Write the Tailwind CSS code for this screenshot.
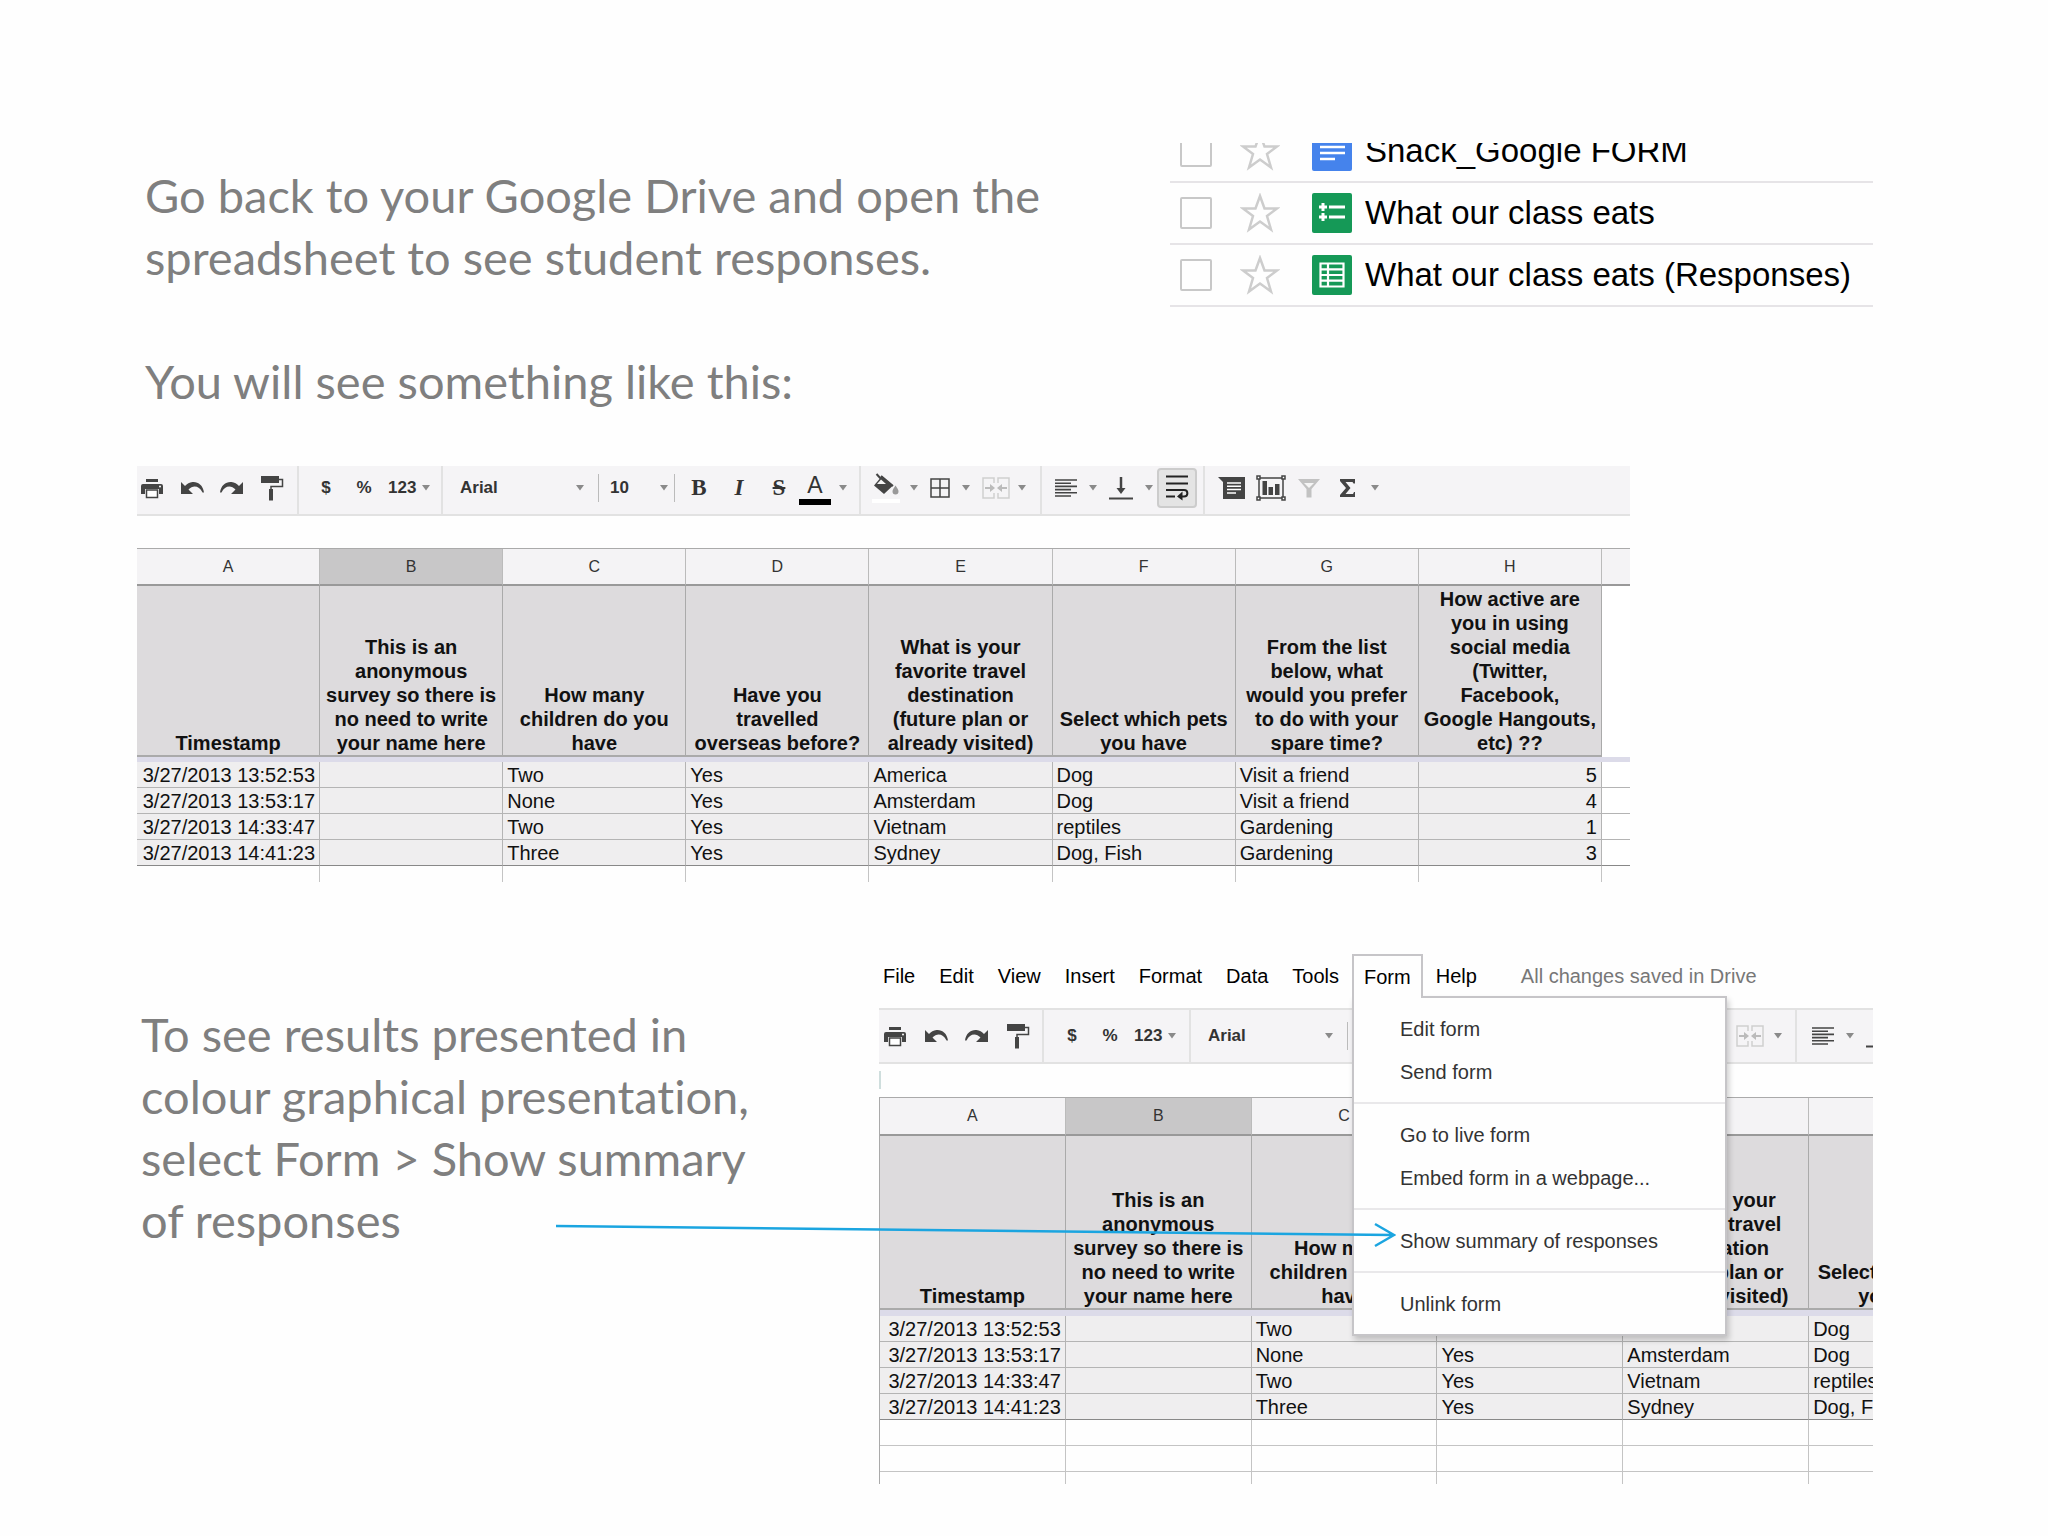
<!DOCTYPE html>
<html lang="en">
<head>
    <meta charset="UTF-8">
    <meta name="viewport" content="width=device-width, initial-scale=1.0">
    <title>Google Forms - Viewing Responses</title>
    <script src="https://cdn.jsdelivr.net/npm/@tailwindcss/browser@4"></script>
</head>
<body class="bg-[#fefefe] min-h-screen font-['Liberation_Sans',Arial,sans-serif] text-[#222]">

    <!-- Shared icons -->
    <svg class="hidden">
        <symbol id="star" viewBox="0 0 40 40"><path d="M20 3l4.500 12.500H37L27 23l4 13.500L20 28.500 9 36.500 13 23 3 15.500h12.500z" fill="none" stroke="#cdcdcd" stroke-width="2.500"/></symbol>
        <symbol id="caret" viewBox="0 0 8 6"><path d="M0 0h8L4 5.500z" fill="#8a8a8a"/></symbol>
        <symbol id="print" viewBox="0 0 24 24"><path d="M6 3h12v3H6zM3 8h18a2 2 0 0 1 2 2v8h-4v-5H5v5H1v-8a2 2 0 0 1 2-2z" fill="#444"/><path d="M6.500 14h11v7.500h-11z" fill="#fff" stroke="#444" stroke-width="1.500"/><circle cx="20" cy="10.500" r="1" fill="#fff"/></symbol>
        <symbol id="undo" viewBox="0 0 24 24"><path d="M1 6v12h12L8.500 13.500C13 9 19 9.500 22.500 16.500H24C23 9 18 5.500 12.500 6 9.500 6.300 7 8 5 10z" fill="#444"/></symbol>
        <symbol id="redo" viewBox="0 0 24 24"><path d="M23 6v12H11l4.500-4.500C11 9 5 9.500 1.500 16.500H0C1 9 6 5.500 11.500 6c3 .3 5.500 2 7.500 4z" fill="#444"/></symbol>
        <symbol id="roller" viewBox="0 0 24 26"><path d="M1 1h18v7H1z" fill="#444"/><path d="M19 4.500h3.500v7H11V15" fill="none" stroke="#444" stroke-width="1.500"/><path d="M9 14h4v11.500H9z" fill="#444"/></symbol>
        <symbol id="bucket" viewBox="0 0 28 32"><path d="M4.500 2l6 6.500" stroke="#444" stroke-width="2" fill="none"/><path d="M9 4l12 10" stroke="#444" stroke-width="2" fill="none"/><path d="M10 4L2 13.500 12 22l9-8.500z" fill="#444"/><path d="M9 7.500L5 12h9z" fill="#f5f5f5"/><path d="M23.500 13.500c2 3 3 4.500 3 6a3 3 0 0 1-6 0c0-1.500 1-3 3-6z" fill="#999"/><path d="M0 27h28v4H0z" fill="#fff"/></symbol>
        <symbol id="grid" viewBox="0 0 20 20"><path d="M1 1h18v18H1zM10 1v18M1 10h18" fill="none" stroke="#444" stroke-width="1.500"/></symbol>
        <symbol id="merge" viewBox="0 0 28 22"><path d="M12 6V1H1v20h11v-5M16 6V1h11v20H16v-5" fill="none" stroke="#cfcfcf" stroke-width="1.500"/><path d="M3 11h6M25 11h-6" stroke="#bbb" stroke-width="2"/><path d="M8 7l5 4-5 4zM20 7l-5 4 5 4z" fill="#bbb"/></symbol>
        <symbol id="align" viewBox="0 0 22 18"><path d="M0 1h22M0 4.200h16M0 7.400h22M0 10.600h16M0 13.800h22M0 17h16" stroke="#444" stroke-width="1.600"/></symbol>
        <symbol id="valign" viewBox="0 0 24 24"><path d="M12 1v12" stroke="#444" stroke-width="2.500"/><path d="M7.500 12h9L12 18z" fill="#444"/><path d="M0 22.500h24" stroke="#444" stroke-width="2"/></symbol>
        <symbol id="wrap" viewBox="0 0 24 26"><path d="M1 1.500h22M1 8.500h22" stroke="#222" stroke-width="2"/><path d="M1 15h18c4.500 0 4.500 6.500 0 6.500h-3M1 21.500h9" fill="none" stroke="#222" stroke-width="2"/><path d="M17.500 16.500v9l-5.500-4z" fill="#222"/></symbol>
        <symbol id="comment" viewBox="0 0 28 24"><path d="M0 1h27v22H5V6z" fill="#444"/><path d="M9 7h14M9 10.300h14M9 13.600h14M9 16.900h9" stroke="#fff" stroke-width="1.500"/></symbol>
        <symbol id="chart" viewBox="0 0 30 26"><path d="M3 3h24v20H3z" fill="none" stroke="#444" stroke-width="1.500"/><path d="M6.500 6H11v14H6.500zM12.500 12H17v8h-4.500zM19 9h4.500v11H19z" fill="#444"/><path d="M1 1h3v3H1zM26 1h3v3h-3zM1 22h3v3H1zM26 22h3v3h-3z" fill="#fff" stroke="#444" stroke-width="1.500"/></symbol>
        <symbol id="filter" viewBox="0 0 22 20"><path d="M0 1h22l-8.500 10v8.500h-5V11z" fill="#c2c2c2"/><path d="M6 5h10l-5 5z" fill="#f5f5f5"/></symbol>
        <symbol id="sigma" viewBox="0 0 15 20"><path d="M0 1h15v4.500h-1.500L12.500 4H5.500L10.500 10 5.500 16h7.500l1-2h1v5H0v-2L6 10 0 3z" fill="#444"/></symbol>
    </svg>

    <main class="pt-[143px] pl-[137px] pr-[175px]">

        <!-- Step 1: open the spreadsheet -->
        <section class="grid grid-cols-[1033px_1fr]">
            <div class="pt-[21px] pl-2 font-['Lato',sans-serif] text-[47px] leading-[62px] text-[#7f7f7f]">
                <p>Go back to your Google Drive and open the<br>spreadsheet to see student responses.</p>
                <p class="mt-[62px]">You will see something like this:</p>
            </div>

            <ul class="h-[164px] overflow-hidden flex flex-col justify-end text-[33px] text-black whitespace-nowrap [&>li]:h-[62px] [&>li]:shrink-0 [&>li]:flex [&>li]:items-center [&>li]:pl-[10px] [&>li]:border-b-2 [&>li]:border-[#e6e4e7] [&_input]:appearance-none [&_input]:size-8 [&_input]:border-2 [&_input]:border-[#c8c8c8] [&_input]:rounded-xs [&_button]:ml-7 [&_button]:mr-8 [&_label]:flex [&_label]:items-center [&_label]:gap-[13px]">
                <li>
                    <input type="checkbox" id="file1">
                    <button type="button" aria-label="Star"><svg class="size-10"><use href="#star"/></svg></button>
                    <label for="file1">
                        <svg class="size-10" viewBox="0 0 40 40"><rect width="40" height="40" rx="2" fill="#4583ec"/><path d="M8 10h25M8 16h25M8 22h25M8 28h15" stroke="#fff" stroke-width="2.500"/></svg>
                        Snack_Google FORM
                    </label>
                </li>
                <li>
                    <input type="checkbox" id="file2">
                    <button type="button" aria-label="Star"><svg class="size-10"><use href="#star"/></svg></button>
                    <label for="file2">
                        <svg class="size-10" viewBox="0 0 40 40"><rect width="40" height="40" rx="2" fill="#159957"/><path d="M17 14h16M17 24h16M7 14h8M11 10v8M7 24h8M11 20v8" stroke="#fff" stroke-width="3"/></svg>
                        What our class eats
                    </label>
                </li>
                <li>
                    <input type="checkbox" id="file3">
                    <button type="button" aria-label="Star"><svg class="size-10"><use href="#star"/></svg></button>
                    <label for="file3">
                        <svg class="size-10" viewBox="0 0 40 40"><rect width="40" height="40" rx="2" fill="#159957"/><path d="M8.500 8.500h23v23h-23zM16 8v24M8 14.300h24M8 20h24M8 25.700h24" fill="none" stroke="#fff" stroke-width="2.200"/></svg>
                        What our class eats (Responses)
                    </label>
                </li>
            </ul>
        </section>

        <!-- Spreadsheet with responses -->
        <section class="mt-[54px] w-[86%]">
            <div class="flex h-[50px] bg-[#f5f4f6] border-b-2 border-[#e2e2e2] text-[17px] font-bold text-[#333] [&>div]:flex [&>div]:items-center [&>div]:pb-1 [&>div]:shrink-0">
                <div class="w-[162px] pl-[3px] gap-4 border-r-2 border-[#e2e2e2]">
                    <button type="button" aria-label="Print"><svg class="size-6"><use href="#print"/></svg></button>
                    <button type="button" aria-label="Undo"><svg class="size-6"><use href="#undo"/></svg></button>
                    <button type="button" aria-label="Redo"><svg class="size-6"><use href="#redo"/></svg></button>
                    <button type="button" aria-label="Paint format"><svg class="w-6 h-[26px]"><use href="#roller"/></svg></button>
                </div>
                <div class="w-[144px] pl-[13px] gap-[10px] border-r-2 border-[#e2e2e2]">
                    <button type="button" class="w-7">$</button>
                    <button type="button" class="w-7">%</button>
                    <button type="button" class="flex items-center gap-1.5">123 <svg class="w-2 h-1.5"><use href="#caret"/></svg></button>
                </div>
                <div class="w-[418px] pl-[17px] border-r-2 border-[#e2e2e2]">
                    <select aria-label="Font" class="appearance-none w-[116px]"><option>Arial</option></select>
                    <svg class="w-2 h-1.5"><use href="#caret"/></svg>
                    <span class="h-7 border-l border-[#bbb] ml-3.5 mr-[11px]"></span>
                    <select aria-label="Font size" class="appearance-none w-[50px]"><option>10</option></select>
                    <svg class="w-2 h-1.5"><use href="#caret"/></svg>
                    <span class="h-7 border-l border-[#bbb] ml-1.5 mr-1"></span>
                    <button type="button" class="w-10 font-['Liberation_Serif',serif] text-[23px]">B</button>
                    <button type="button" class="w-10 font-['Liberation_Serif',serif] text-[23px] italic">I</button>
                    <button type="button" class="w-10 font-['Liberation_Serif',serif] text-[23px] line-through">S</button>
                    <button type="button" class="w-8 flex flex-col font-normal text-[23px] leading-5 items-center gap-1 pt-1 mr-2">A<span class="w-8 h-1.5 bg-black"></span></button>
                    <svg class="w-2 h-1.5"><use href="#caret"/></svg>
                </div>
                <div class="w-[181px] pl-[11px] border-r-2 border-[#e2e2e2]">
                    <button type="button" aria-label="Fill color" class="mr-2.5"><svg class="w-7 h-8"><use href="#bucket"/></svg></button>
                    <svg class="w-2 h-1.5"><use href="#caret"/></svg>
                    <button type="button" aria-label="Borders" class="mx-3"><svg class="size-5"><use href="#grid"/></svg></button>
                    <svg class="w-2 h-1.5"><use href="#caret"/></svg>
                    <button type="button" aria-label="Merge cells" class="ml-3 mr-2"><svg class="w-7 h-[22px]"><use href="#merge"/></svg></button>
                    <svg class="w-2 h-1.5"><use href="#caret"/></svg>
                </div>
                <div class="w-[163px] pl-[13px] border-r-2 border-[#e2e2e2]">
                    <button type="button" aria-label="Align" class="mr-3"><svg class="w-[22px] h-[18px]"><use href="#align"/></svg></button>
                    <svg class="w-2 h-1.5"><use href="#caret"/></svg>
                    <button type="button" aria-label="Vertical align" class="mx-3"><svg class="size-6"><use href="#valign"/></svg></button>
                    <svg class="w-2 h-1.5"><use href="#caret"/></svg>
                    <button type="button" aria-label="Wrap text" class="ml-1 size-10 shrink-0 flex items-center justify-center border-2 border-[#ccc] rounded-sm bg-[#e4e4e4]"><svg class="w-6 h-[26px]"><use href="#wrap"/></svg></button>
                </div>
                <div class="pl-[13px]">
                    <button type="button" aria-label="Insert comment" class="mr-2.5"><svg class="w-7 h-6"><use href="#comment"/></svg></button>
                    <button type="button" aria-label="Insert chart" class="mr-3"><svg class="w-[30px] h-[26px]"><use href="#chart"/></svg></button>
                    <button type="button" aria-label="Filter" class="mr-5"><svg class="w-[22px] h-5"><use href="#filter"/></svg></button>
                    <button type="button" aria-label="Functions" class="mr-4"><svg class="w-[15px] h-5"><use href="#sigma"/></svg></button>
                    <svg class="w-2 h-1.5"><use href="#caret"/></svg>
                </div>
            </div>

            <table class="mt-8 w-full table-fixed border-separate border-spacing-0 border-t border-[#aaa] text-[20px] leading-6 whitespace-nowrap text-[#111] [&_.letters>th]:h-[37px] [&_.letters>th]:bg-[#f4f3f5] [&_.letters>th]:border-r [&_.letters>th]:border-b-2 [&_.letters>th]:border-r-[#bbb] [&_.letters>th]:border-b-[#999] [&_.letters>th]:text-[16px] [&_.letters>th]:font-normal [&_.letters>th]:text-[#333] [&_.titles>th]:h-[171px] [&_.titles>th]:bg-[#dddbdd] [&_.titles>th]:align-bottom [&_.titles>th]:border-r [&_.titles>th]:border-b-2 [&_.titles>th]:border-[#aaa] [&_.answers>td]:h-[26px] [&_.answers>td]:px-1 [&_.answers>td]:bg-[#efeeef] [&_.answers>td]:border-r [&_.answers>td]:border-b [&_.answers>td]:border-[#b4b4b4] [&_.answers>td]:last:bg-white [&_.answers>td]:last:border-r-0 [&_.blank>td]:h-4 [&_.blank>td]:border-r [&_.blank>td]:border-[#c4c4c4]">
                <colgroup><col><col><col><col><col><col><col><col><col class="w-7"></colgroup>
                <tr class="letters"><th>A</th><th class="bg-[#c8c7c8]!">B</th><th>C</th><th>D</th><th>E</th><th>F</th><th>G</th><th>H</th><th class="border-r-0!"></th></tr>
                <tr class="titles">
                    <th>Timestamp</th>
                    <th>This is an<br>anonymous<br>survey so there is<br>no need to write<br>your name here</th>
                    <th>How many<br>children do you<br>have</th>
                    <th>Have you<br>travelled<br>overseas before?</th>
                    <th>What is your<br>favorite travel<br>destination<br>(future plan or<br>already visited)</th>
                    <th>Select which pets<br>you have</th>
                    <th>From the list<br>below, what<br>would you prefer<br>to do with your<br>spare time?</th>
                    <th>How active are<br>you in using<br>social media<br>(Twitter,<br>Facebook,<br>Google Hangouts,<br>etc) ??</th>
                    <th class="bg-white! border-0!"></th>
                </tr>
                <tr><td colspan="9" class="h-[5px] bg-[#dcdbe9]"></td></tr>
                <tr class="answers"><td class="text-right">3/27/2013 13:52:53</td><td></td><td>Two</td><td>Yes</td><td>America</td><td>Dog</td><td>Visit a friend</td><td class="text-right">5</td><td></td></tr>
                <tr class="answers"><td class="text-right">3/27/2013 13:53:17</td><td></td><td>None</td><td>Yes</td><td>Amsterdam</td><td>Dog</td><td>Visit a friend</td><td class="text-right">4</td><td></td></tr>
                <tr class="answers"><td class="text-right">3/27/2013 14:33:47</td><td></td><td>Two</td><td>Yes</td><td>Vietnam</td><td>reptiles</td><td>Gardening</td><td class="text-right">1</td><td></td></tr>
                <tr class="answers [&>td]:border-b-[#888]!"><td class="text-right">3/27/2013 14:41:23</td><td></td><td>Three</td><td>Yes</td><td>Sydney</td><td>Dog, Fish</td><td>Gardening</td><td class="text-right">3</td><td></td></tr>
                <tr class="blank"><td></td><td></td><td></td><td></td><td></td><td></td><td></td><td></td><td class="border-0!"></td></tr>
            </table>
        </section>

        <!-- Step 2: show the summary -->
        <section class="relative mt-[72px] grid grid-cols-[742px_1fr]">
            <p class="pt-[49px] pl-1 font-['Lato',sans-serif] text-[47px] leading-[62px] text-[#7f7f7f] [font-variant-ligatures:none]">To see results presented in<br>colour graphical presentation,<br>select Form &gt; Show summary<br>of responses</p>

            <div class="min-w-0">
                <nav class="h-11 mb-2.5 pl-1 flex items-center gap-6 text-[20px] text-black whitespace-nowrap">
                    <button type="button">File</button>
                    <button type="button">Edit</button>
                    <button type="button">View</button>
                    <button type="button">Insert</button>
                    <button type="button">Format</button>
                    <button type="button">Data</button>
                    <button type="button">Tools</button>
                    <div class="relative -mx-[11px] self-stretch">
                        <button type="button" class="relative z-20 h-11 px-[10px] bg-[#fefefe] border-2 border-b-0 border-[#c6c5c8]">Form</button>
                        <!-- Form menu -->
                        <div class="absolute z-10 top-[42px] left-0 w-[375px] py-[9px] bg-[#fefefe] border-2 border-[#c6c5c8] shadow-[2px_4px_6px_rgba(0,0,0,0.2)] text-[#333] [&_button]:block [&_button]:w-full [&_button]:h-[43px] [&_button]:pl-[46px] [&_button]:text-left [&_hr]:my-[9px] [&_hr]:border-t-2 [&_hr]:border-[#e9e8ea]">
                            <button type="button">Edit form</button>
                            <button type="button">Send form</button>
                            <hr>
                            <button type="button">Go to live form</button>
                            <button type="button">Embed form in a webpage...</button>
                            <hr>
                            <button type="button">Show summary of responses</button>
                            <hr>
                            <button type="button">Unlink form</button>
                        </div>
                    </div>
                    <button type="button">Help</button>
                    <span class="ml-5 text-[#777]">All changes saved in Drive</span>
                </nav>

                <div class="flex h-14 overflow-hidden bg-[#f5f4f6] border-y-2 border-[#e2e2e2] text-[17px] font-bold text-[#333] [&>div]:flex [&>div]:items-center [&>div]:shrink-0">
                    <div class="w-[165px] pl-1 gap-[17px] border-r-2 border-[#e2e2e2]">
                        <button type="button" aria-label="Print"><svg class="size-6"><use href="#print"/></svg></button>
                        <button type="button" aria-label="Undo"><svg class="size-6"><use href="#undo"/></svg></button>
                        <button type="button" aria-label="Redo"><svg class="size-6"><use href="#redo"/></svg></button>
                        <button type="button" aria-label="Paint format"><svg class="w-6 h-[26px]"><use href="#roller"/></svg></button>
                    </div>
                    <div class="w-[147px] pl-[14px] gap-[10px] border-r-2 border-[#e2e2e2]">
                        <button type="button" class="w-7">$</button>
                        <button type="button" class="w-7">%</button>
                        <button type="button" class="flex items-center gap-1.5">123 <svg class="w-2 h-1.5"><use href="#caret"/></svg></button>
                    </div>
                    <div class="pl-[17px]">
                        <select aria-label="Font" class="appearance-none w-[117px]"><option>Arial</option></select>
                        <svg class="w-2 h-1.5"><use href="#caret"/></svg>
                        <span class="h-7 border-l border-[#bbb] ml-3.5"></span>
                    </div>
                    <div class="ml-auto w-[62px] border-r-2 border-[#e2e2e2]">
                        <button type="button" aria-label="Merge cells" class="ml-px mr-2.5"><svg class="w-7 h-[22px]"><use href="#merge"/></svg></button>
                        <svg class="w-2 h-1.5"><use href="#caret"/></svg>
                    </div>
                    <div class="w-[76px] pl-[15px] overflow-hidden">
                        <button type="button" aria-label="Align" class="mr-3 shrink-0"><svg class="w-[22px] h-[18px]"><use href="#align"/></svg></button>
                        <svg class="w-2 h-1.5 shrink-0"><use href="#caret"/></svg>
                        <button type="button" aria-label="Vertical align" class="ml-3 shrink-0"><svg class="size-6"><use href="#valign"/></svg></button>
                    </div>
                </div>

                <div class="h-[18px] mt-[7px] mb-2 border-l-2 border-[#cfdedd]"></div>

                <div class="overflow-hidden">
                    <table class="w-[1116px] table-fixed border-separate border-spacing-0 border-t border-l border-[#aaa] text-[20px] leading-6 whitespace-nowrap text-[#111] [&_.letters>th]:h-[38px] [&_.letters>th]:bg-[#f4f3f5] [&_.letters>th]:border-r [&_.letters>th]:border-b-2 [&_.letters>th]:border-r-[#bbb] [&_.letters>th]:border-b-[#999] [&_.letters>th]:text-[16px] [&_.letters>th]:font-normal [&_.letters>th]:text-[#333] [&_.titles>th]:h-[174px] [&_.titles>th]:bg-[#dddbdd] [&_.titles>th]:align-bottom [&_.titles>th]:border-r [&_.titles>th]:border-b-2 [&_.titles>th]:border-[#aaa] [&_.answers>td]:h-[26px] [&_.answers>td]:px-1 [&_.answers>td]:bg-[#efeeef] [&_.answers>td]:border-r [&_.answers>td]:border-b [&_.answers>td]:border-[#b4b4b4] [&_.blank>td]:h-[26px] [&_.blank>td]:border-r [&_.blank>td]:border-b [&_.blank>td]:border-[#c4c4c4]">
                        <tr class="letters"><th>A</th><th class="bg-[#c8c7c8]!">B</th><th>C</th><th>D</th><th>E</th><th>F</th></tr>
                        <tr class="titles">
                            <th>Timestamp</th>
                            <th>This is an<br>anonymous<br>survey so there is<br>no need to write<br>your name here</th>
                            <th>How many<br>children do you<br>have</th>
                            <th>Have you<br>travelled<br>overseas before?</th>
                            <th>What is your<br>favorite travel<br>destination<br>(future plan or<br>already visited)</th>
                            <th>Select which pets<br>you have</th>
                        </tr>
                        <tr><td colspan="6" class="h-[6px] bg-[#dcdbe9]"></td></tr>
                        <tr class="answers"><td class="text-right">3/27/2013 13:52:53</td><td></td><td>Two</td><td>Yes</td><td>America</td><td>Dog</td></tr>
                        <tr class="answers"><td class="text-right">3/27/2013 13:53:17</td><td></td><td>None</td><td>Yes</td><td>Amsterdam</td><td>Dog</td></tr>
                        <tr class="answers"><td class="text-right">3/27/2013 14:33:47</td><td></td><td>Two</td><td>Yes</td><td>Vietnam</td><td>reptiles</td></tr>
                        <tr class="answers [&>td]:border-b-[#888]!"><td class="text-right">3/27/2013 14:41:23</td><td></td><td>Three</td><td>Yes</td><td>Sydney</td><td>Dog, Fish</td></tr>
                        <tr class="blank"><td></td><td></td><td></td><td></td><td></td><td></td></tr>
                        <tr class="blank"><td></td><td></td><td></td><td></td><td></td><td></td></tr>
                        <tr class="blank [&>td]:h-3! [&>td]:border-b-0!"><td></td><td></td><td></td><td></td><td></td><td></td></tr>
                    </table>
                </div>
            </div>

            <!-- Pointer to "Show summary of responses" -->
            <svg class="absolute z-30 left-[419px] top-[264px] w-[840px] h-8 pointer-events-none" viewBox="0 0 840 32"><path d="M0 8l837 9M819 6l19 11-19 11" fill="none" stroke="#1ba5e0" stroke-width="2.500"/></svg>
        </section>
    </main>

</body>
</html>
